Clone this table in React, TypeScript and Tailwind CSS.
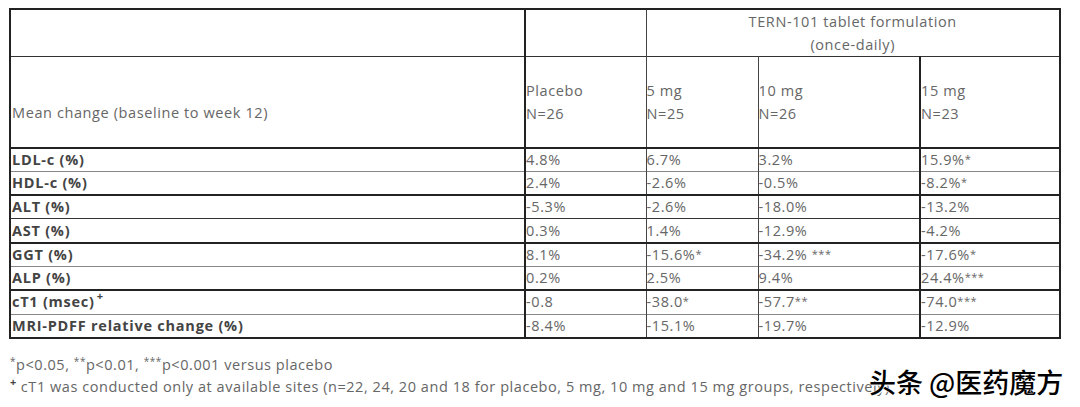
import React from 'react'

const rows = [
  { label: 'LDL-c (%)', vals: ['4.8%', '6.7%', '3.2%', '15.9%*'], line: 'border-b border-b-[#888]' },
  { label: 'HDL-c (%)', vals: ['2.4%', '-2.6%', '-0.5%', '-8.2%*'], line: 'border-b-2 border-b-[#222]' },
  { label: 'ALT (%)', vals: ['-5.3%', '-2.6%', '-18.0%', '-13.2%'], line: 'border-b border-b-[#333]' },
  { label: 'AST (%)', vals: ['0.3%', '1.4%', '-12.9%', '-4.2%'], line: 'border-b-2 border-b-[#222]' },
  { label: 'GGT (%)', vals: ['8.1%', '-15.6%*', '-34.2% ***', '-17.6%*'], line: 'border-b border-b-[#888]' },
  { label: 'ALP (%)', vals: ['0.2%', '2.5%', '9.4%', '24.4%***'], line: 'border-b-2 border-b-[#222]' },
  { label: 'cT1 (msec)', sup: '+', vals: ['-0.8', '-38.0*', '-57.7**', '-74.0***'], line: 'border-b border-b-[#888]' },
  { label: 'MRI-PDFF relative change (%)', vals: ['-8.4%', '-15.1%', '-19.7%', '-12.9%'], line: '' },
]

const font = { fontFamily: '"Open Sans", "Noto Sans", sans-serif' }

// split trailing stars so they can be drawn small, like the source table
function Val({ v }: { v: string }) {
  const m = v.match(/^(.*?)(\*+)$/)
  if (!m) return <>{v}</>
  return (
    <>
      {m[1]}
      <span className="text-[11px] leading-none tracking-[0.5px] relative -top-[2px]">{m[2]}</span>
    </>
  )
}

export default function App() {
  return (
    <div className="relative w-[1080px] h-[407px] bg-white overflow-hidden" style={font}>
      <div className="pt-[8px] pl-[9px]">
        <table className="table-fixed border-collapse w-[1050px] border-2 border-[#222] text-[14.5px] tracking-[0.6px] text-[#666]">
          <colgroup>
            <col className="w-[515px]" />
            <col className="w-[121px]" />
            <col className="w-[112px]" />
            <col className="w-[162px]" />
            <col className="w-[140px]" />
          </colgroup>
          <thead>
            <tr className="h-[46px] border-b border-b-[#333]">
              <th className="border-r-2 border-r-[#222]" />
              <th className="border-r border-r-[#444]" />
              <th colSpan={3} className="font-normal text-center leading-[23px] align-middle">
                TERN-101 tablet formulation
                <br />
                (once-daily)
              </th>
            </tr>
            <tr className="h-[91px] border-b-2 border-b-[#222]">
              <th className="font-normal text-left align-middle pl-[1px] border-r-2 border-r-[#222]">
                <span className="relative top-[11px]">Mean change (baseline to week 12)</span>
              </th>
              <th className="font-normal text-left align-middle leading-[23px] border-r border-r-[#444]">
                Placebo<br />N=26
              </th>
              <th className="font-normal text-left align-middle leading-[23px] border-r border-r-[#444]">
                5 mg<br />N=25
              </th>
              <th className="font-normal text-left align-middle leading-[23px] border-r-2 border-r-[#222]">
                10 mg<br />N=26
              </th>
              <th className="font-normal text-left align-middle leading-[23px]">
                15 mg<br />N=23
              </th>
            </tr>
          </thead>
          <tbody>
            {rows.map((r) => (
              <tr key={r.label} className={`h-[23.8px] ${r.line}`}>
                <td className="pl-[1px] py-0 leading-[22px] font-bold text-[#444] tracking-[0.75px] border-r-2 border-r-[#222]">
                  {r.label}
                  {r.sup && (
                    <span className="text-[11px] leading-none font-bold ml-[2px] relative -top-[7px]">{r.sup}</span>
                  )}
                </td>
                <td className="py-0 leading-[22px] border-r border-r-[#444]"><Val v={r.vals[0]} /></td>
                <td className="py-0 leading-[22px] border-r border-r-[#444]"><Val v={r.vals[1]} /></td>
                <td className="py-0 leading-[22px] border-r-2 border-r-[#222]"><Val v={r.vals[2]} /></td>
                <td className="py-0 leading-[22px]"><Val v={r.vals[3]} /></td>
              </tr>
            ))}
          </tbody>
        </table>
      </div>
      <div className="pl-[10px] pt-[15px] text-[14.5px] tracking-[0.55px] text-[#666] leading-[22px]">
        <div>
          <sup className="text-[10px]">*</sup>p&lt;0.05, <sup className="text-[10px]">**</sup>p&lt;0.01,{' '}
          <sup className="text-[10px]">***</sup>p&lt;0.001 versus placebo
        </div>
        <div>
          <sup className="text-[11px] font-bold text-[#444] mr-[4px]">+</sup>cT1 was conducted only at available sites (n=22, 24, 20 and 18 for placebo, 5 mg, 10 mg and 15 mg groups, respectively)
        </div>
      </div>
      <div
        className="absolute left-[869px] top-[364px] text-[27px] leading-[36px] font-medium text-black"
        style={{ fontFamily: '"Noto Sans CJK SC", sans-serif', textShadow: '0 0 2px #fff, 1px 1px 0 #fff' }}
      >
        头条 @医药魔方
      </div>
    </div>
  )
}
